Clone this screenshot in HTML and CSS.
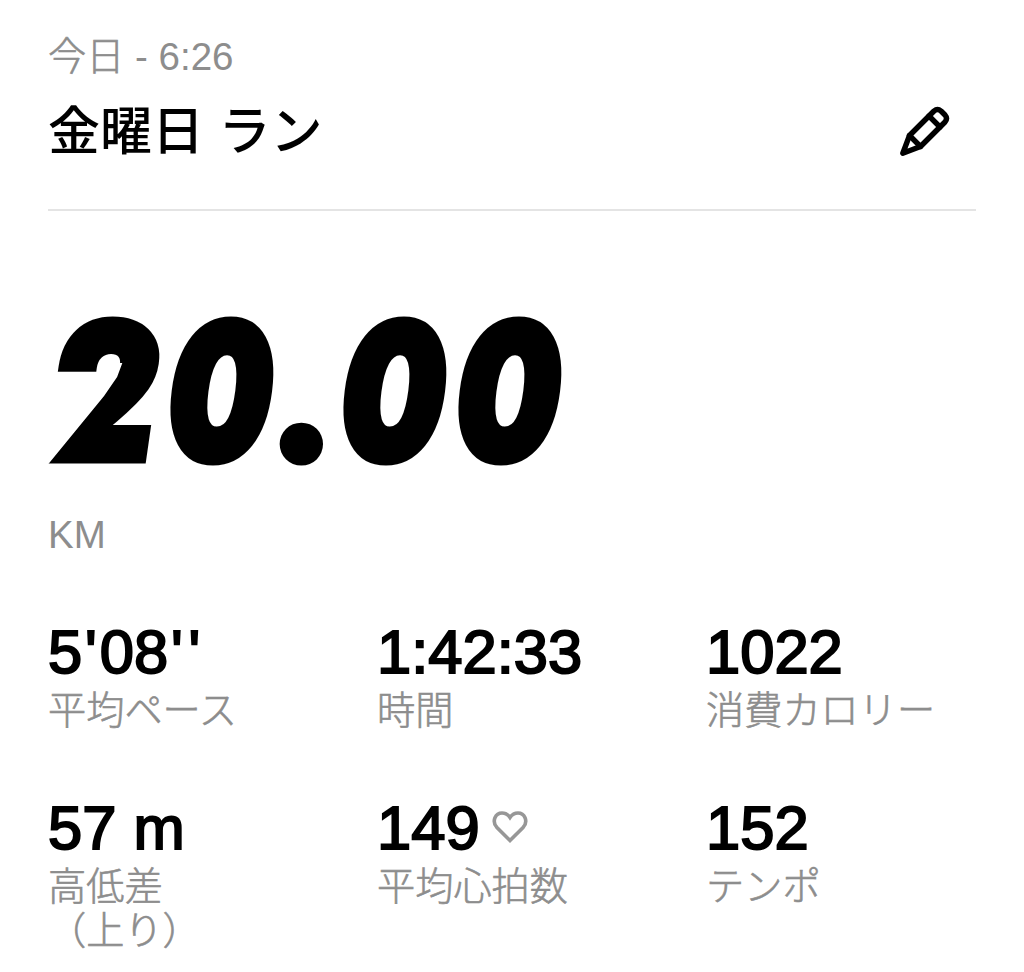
FILE: index.html
```html
<!DOCTYPE html>
<html lang="ja">
<head>
<meta charset="utf-8">
<title>金曜日 ラン</title>
<link rel="stylesheet" href="styles.css">
</head>
<body>
<main class="run">
  <header class="head">
    <div class="date"><span class="jp">今日</span> - 6:26</div>
    <div class="title-row">
      <h1 class="title">金曜日 ラン</h1>
      <svg class="pencil" viewBox="0 0 54 54" fill="none" stroke="#000" stroke-width="5.4" stroke-linejoin="round" stroke-linecap="round">
        <path d="M4.800 48.200 11.500 30.500 36 6Q39.500 3 43 6L47 10Q50 13.500 47 17L22.500 41.500Z"/>
        <path d="M31 11 42 22M11.500 30.500 22.500 41.500"/>
      </svg>
    </div>
  </header>
  <section class="distance">
    <div class="big"><span class="digit two">2</span><span class="digit">0</span><span class="dot">.</span><span class="digit">0</span><span class="digit">0</span></div>
    <div class="unit">KM</div>
  </section>
  <section class="stats">
    <div class="stat"><div class="value">5<span class="prime">'</span>08<span class="prime">'</span><span class="prime">'</span></div><div class="label">平均ペース</div></div>
    <div class="stat"><div class="value">1:42:33</div><div class="label">時間</div></div>
    <div class="stat"><div class="value">1022</div><div class="label">消費カロリー</div></div>
    <div class="stat"><div class="value">57 m</div><div class="label">高低差<br>（上り）</div></div>
    <div class="stat"><div class="value">149<svg class="heart" viewBox="0 0 36 34" fill="none" stroke="#979797" stroke-width="3.600" stroke-linejoin="miter"><path d="M18 30.500 4.700 17.200C-.5 11 3.500 3 10 3 14 3 16 4.500 18 7.500 20 4.500 22 3 26 3 32.500 3 36.500 11 31.300 17.200Z"/></svg></div><div class="label">平均心拍数</div></div>
    <div class="stat"><div class="value">152</div><div class="label">テンポ</div></div>
  </section>
</main>
</body>
</html>
```
FILE: styles.css
```css
body {
  margin: 0;
  background: #fff;
  color: #000;
  font-family: "Liberation Sans", "Noto Sans CJK JP", sans-serif;
}
.run {
  box-sizing: border-box;
  height: 972px;
  padding: 35px 48px 0;
  overflow: hidden;
}
.head {
  height: 174px;
  border-bottom: 2px solid #e4e4e4;
}
.date, .unit, .label {
  color: #8d8d8d;
  font-size: 38.5px;
  font-weight: 300;
  line-height: 44px;
}
.jp, .label {
  font-size: 38.2px;
  -webkit-text-stroke: 0.6px #8d8d8d;
}
.title-row {
  display: flex;
  align-items: center;
  justify-content: space-between;
  margin-top: 21px;
  padding-right: 24px;
}
.title {
  margin: 0;
  font-size: 52px;
  font-weight: 500;
  line-height: 64px;
}
.pencil {
  width: 54px;
  height: 54px;
}
.distance {
  height: 409px;
}
.big {
  display: flex;
  box-sizing: border-box;
  height: 302px;
  padding-top: 78px;
  font: italic 900 187px/204px Inter, sans-serif;
}
.digit {
  width: 115px;
  transform: scaleX(0.777);
  transform-origin: left;
  -webkit-text-stroke: 9px #000;
}
/* the diagonal of the leading digit runs down to a sharp point */
.two {
  width: 116px;
  margin: 0 1px 0 3px;
  transform: scaleX(0.87);
  clip-path: polygon(-40px -20px, 200px -20px, 200px 220px, -3px 220px, -3px 175px, 61px 107px, 76px 88px, 82px 74px, 60px 74px, 60px 86px, -40px 86px);
}
.dot {
  width: 57px;
  margin: -5px 0 0 1px;
  font-family: Lato, sans-serif;
  -webkit-text-stroke: 13px #000;
}
.stats {
  display: grid;
  grid-template-columns: repeat(3, 270px);
  column-gap: 59px;
  grid-auto-rows: 176px;
}
.value {
  display: flex;
  align-items: center;
  font-size: 61.5px;
  line-height: 64px;
  white-space: pre;
  -webkit-text-stroke: 2px #000;
}
.prime {
  width: 17.5px;
  text-align: center;
}
.label {
  margin-top: 5px;
}
.heart {
  width: 36px;
  height: 34px;
  margin: 0 0 3px 12px;
}
```
